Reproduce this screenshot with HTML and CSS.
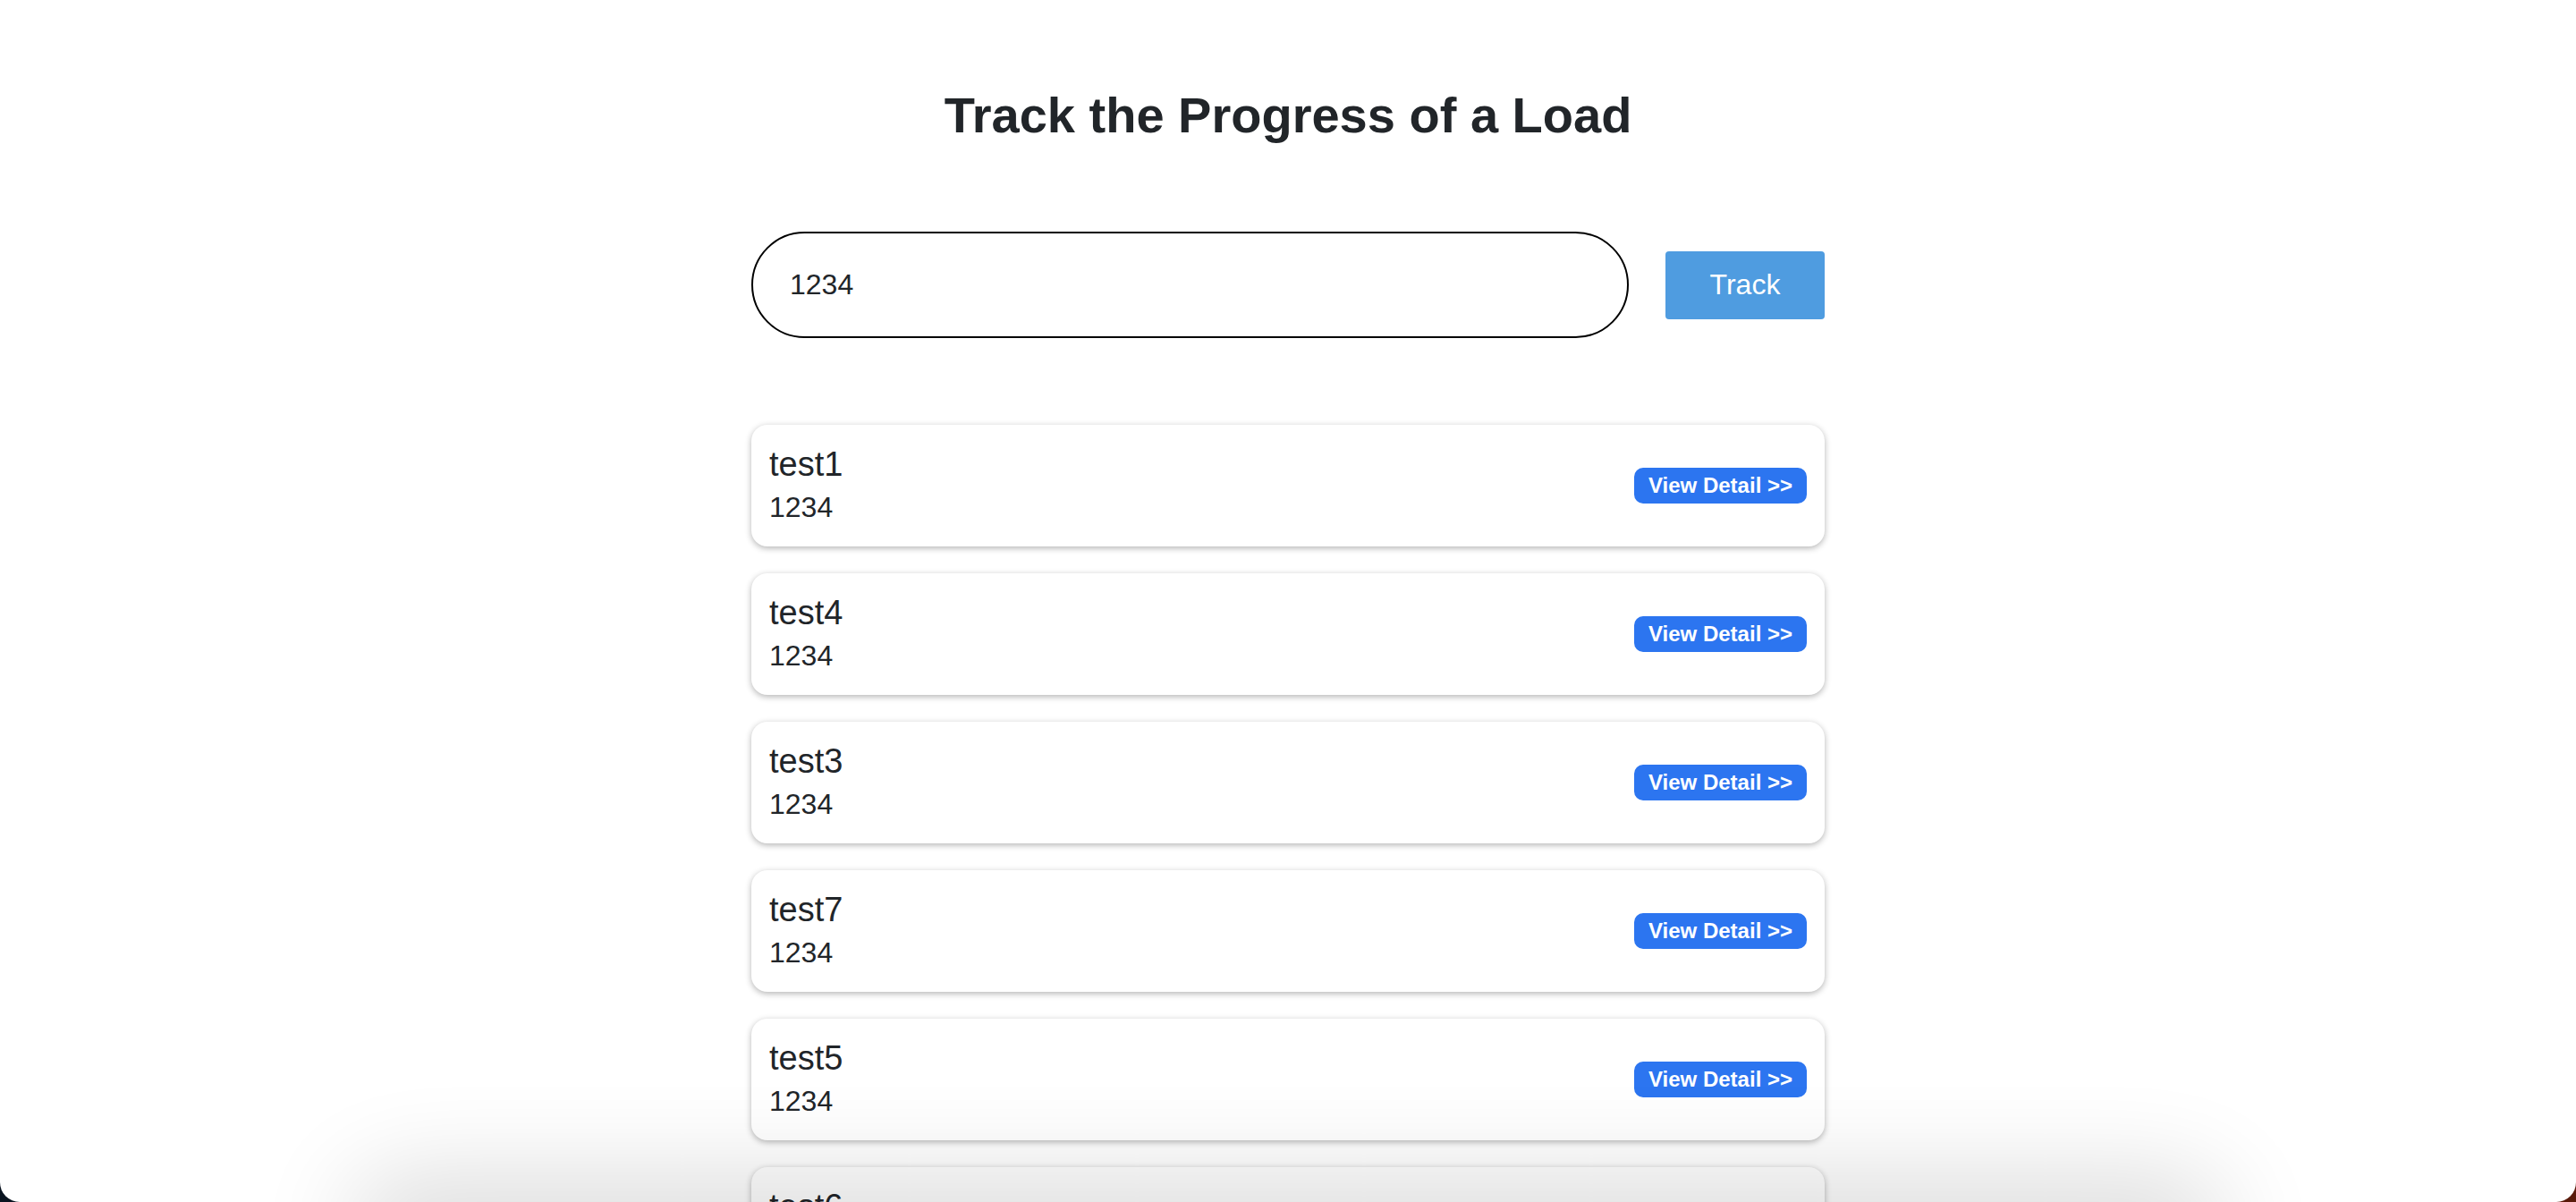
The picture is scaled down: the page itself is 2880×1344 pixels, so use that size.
FILE: index.html
```html
<!DOCTYPE html>
<html lang="en">
<head>
<meta charset="utf-8">
<title>Track the Progress of a Load</title>
<link rel="stylesheet" href="styles.css">
</head>
<body>
<div class="window">
  <main class="page">
    <h1 class="title">Track the Progress of a Load</h1>
    <form class="search">
      <input class="search-input" type="text" value="1234">
      <button class="track-btn" type="button">Track</button>
    </form>
    <ul class="loads">
      <li class="load-card">
        <div class="load-info"><div class="load-name">test1</div><div class="load-id">1234</div></div>
        <button class="detail-btn" type="button">View Detail &gt;&gt;</button>
      </li>
      <li class="load-card">
        <div class="load-info"><div class="load-name">test4</div><div class="load-id">1234</div></div>
        <button class="detail-btn" type="button">View Detail &gt;&gt;</button>
      </li>
      <li class="load-card">
        <div class="load-info"><div class="load-name">test3</div><div class="load-id">1234</div></div>
        <button class="detail-btn" type="button">View Detail &gt;&gt;</button>
      </li>
      <li class="load-card">
        <div class="load-info"><div class="load-name">test7</div><div class="load-id">1234</div></div>
        <button class="detail-btn" type="button">View Detail &gt;&gt;</button>
      </li>
      <li class="load-card">
        <div class="load-info"><div class="load-name">test5</div><div class="load-id">1234</div></div>
        <button class="detail-btn" type="button">View Detail &gt;&gt;</button>
      </li>
      <li class="load-card">
        <div class="load-info"><div class="load-name">test6</div><div class="load-id">1234</div></div>
        <button class="detail-btn" type="button">View Detail &gt;&gt;</button>
      </li>
    </ul>
  </main>
  <div class="dock-shadow"></div>
</div>
</body>
</html>
```

FILE: styles.css
```css
html, body {
  margin: 0;
  padding: 0;
  height: 100%;
}
body {
  background: linear-gradient(90deg, #0a1420 0%, #2a1a20 50%, #5a1a0a 100%);
  font-family: "Liberation Sans", Arial, Helvetica, sans-serif;
  color: #212529;
  overflow: hidden;
}
.window {
  position: relative;
  height: 100vh;
  background: #fff;
  border-radius: 0 0 22px 22px;
  overflow: hidden;
}
.page {
  width: 1200px;
  margin: 0 auto;
  padding-top: 95px;
}
.title {
  margin: 0;
  font-size: 56px;
  line-height: 1.2;
  font-weight: 700;
  text-align: center;
  color: #212529;
}
.search {
  display: flex;
  align-items: center;
  gap: 41px;
  margin: 97px 0 0;
}
.search-input {
  box-sizing: border-box;
  width: 981px;
  height: 119px;
  border: 2px solid #000;
  border-radius: 60px;
  padding: 0 0 0 41px;
  font-family: inherit;
  font-size: 32px;
  color: #212529;
  background: #fff;
  outline: none;
}
.track-btn {
  box-sizing: border-box;
  width: 178px;
  height: 76px;
  border: none;
  border-radius: 4px;
  background: #4f9ce0;
  color: #fff;
  font-family: inherit;
  font-size: 32px;
  padding: 0;
}
.loads {
  list-style: none;
  margin: 97px 0 0;
  padding: 0;
  display: flex;
  flex-direction: column;
  gap: 30px;
}
.load-card {
  box-sizing: border-box;
  height: 136px;
  display: flex;
  align-items: center;
  justify-content: space-between;
  padding: 0 20px;
  background: #fff;
  border-radius: 18px;
  box-shadow: 0 2px 7px rgba(0, 0, 0, 0.3);
}
.load-info {
  display: flex;
  flex-direction: column;
  margin-top: -4px;
}
.load-name {
  font-size: 38px;
  line-height: 44px;
}
.load-id {
  font-size: 32px;
  line-height: 36px;
  margin-top: 8px;
}
.detail-btn {
  height: 40px;
  padding: 0 16px;
  border: none;
  border-radius: 10px;
  background: #2c75f0;
  color: #fff;
  font-family: inherit;
  font-size: 24px;
  font-weight: 700;
}
.dock-shadow {
  position: absolute;
  left: 420px;
  right: 420px;
  bottom: -60px;
  height: 60px;
  border-radius: 40px;
  pointer-events: none;
  box-shadow: 0 0 110px 30px rgba(0, 0, 0, 0.14);
  background: rgba(0, 0, 0, 0.14);
}
```
